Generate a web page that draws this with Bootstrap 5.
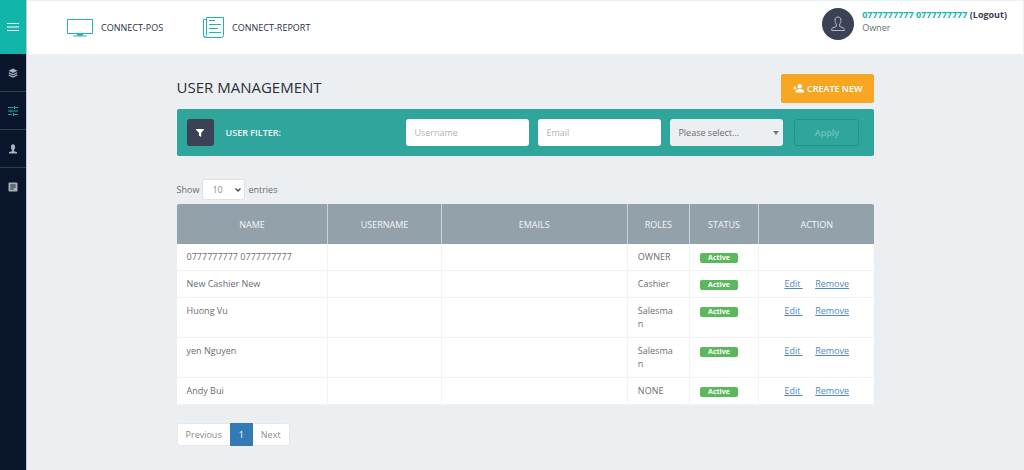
<!DOCTYPE html>
<html lang="en">
<head>
<meta charset="utf-8">
<meta name="viewport" content="width=device-width, initial-scale=1">
<title>User Management</title>
<link href="https://cdn.jsdelivr.net/npm/bootstrap@5.3.0/dist/css/bootstrap.min.css" rel="stylesheet">
<style>
:root { --teal: #12b5a9; --ink: #3b4256; --page: #ebeff2; }
body { font-family: "Open Sans", "Noto Sans", sans-serif; font-size: 9px; line-height: 13px; color: #6a6c6f; background: var(--page); }
.side { width: 27px; background: #08152b; border-right: 1px solid #c3c9cf; }
.side-toggle { height: 54px; background: var(--teal); border: 0; padding: 0; color: #fff; }
.side-link { height: 38px; color: #a9b0ba; border-bottom: 1px solid #343e50; }
.side-link:last-child { border-bottom: 0; }
.side-link.active { color: #20a79d; }
.topbar { height: 54px; background: #fff; border-top: 1px solid #eef0f2; border-right: 1px solid #eef0f2; }
.brand-link { color: #2a3045; text-decoration: none; font-weight: 500; }
.brand-link svg { color: #1fb5aa; flex: none; }
.brands { gap: 40px; padding-left: 40px; }
.avatar { width: 32px; height: 32px; background: var(--ink); color: #b9bec8; }
.account { padding-right: 16px; }
.account a { color: #3a3d4c; text-decoration: none; }
.account .who { color: var(--teal); }
.page { width: 70%; margin: 20px auto 0; }
.page h1 { font-size: 15px; line-height: 20px; color: #2b2d38; font-weight: 400; padding-bottom: 3px; }
.btn { font-size: 9px; line-height: 13px; border-radius: 2px; }
.btn-create { --bs-btn-color: #fff; --bs-btn-bg: #f6a623; --bs-btn-hover-color: #fff; --bs-btn-hover-bg: #e4951a; --bs-btn-border-color: #f6a623; height: 29px; padding: 0 11px; gap: 3px; font-weight: 600; }
.filter-bar { background: #30a59c; border-radius: 2px; padding: 10px 15px 10px 10px; gap: 9px; margin-top: 6px; }
.filter-bar .btn, .filter-bar .form-control, .filter-bar .form-select { height: 27px; border-radius: 3px; }
.btn-funnel { width: 27px; padding: 0; background-color: var(--ink); color: #fff; }
.filter-title { color: #eef9f7; font-weight: 600; margin-left: 3px; }
.form-control, .form-select { font-size: 9px; line-height: 13px; border: 0; padding: 0 8px; }
.form-control { flex: 0 1 123px; }
.form-control::placeholder { color: #b3b3b3; }
.role-select { flex: 0 1 113px; background: var(--page) url("data:image/svg+xml,%3Csvg xmlns='http://www.w3.org/2000/svg' viewBox='0 0 6 4'%3E%3Cpath d='M0 0h6L3 4z' fill='%23777'/%3E%3C/svg%3E") no-repeat right 4px center / 6px 4px; color: #6a6c6f; }
.btn-apply { width: 65px; margin-left: 2px; }
.btn-apply:disabled { color: #70c2ba; border: 1px solid #279188; opacity: 1; font-weight: 600; }
.length-row { margin-top: 23px; margin-bottom: 4px; }
.length-row label { gap: 3px; }
.length-select { width: 43px; height: 21px; padding: 0 9px; border: 1px solid #dfe2e5; border-radius: 3px; color: #8c8c8c; background-image: url("data:image/svg+xml,%3Csvg xmlns='http://www.w3.org/2000/svg' viewBox='0 0 6 4'%3E%3Cpath d='M.5.5 3 3 5.500.5' fill='none' stroke='%23444' stroke-width='1.300'/%3E%3C/svg%3E"); background-size: 6px 4px; background-position: right 3px center; }
.users { table-layout: fixed; --bs-table-bg: #fff; --bs-table-color: #6a6c6f; border-radius: 2px; overflow: hidden; }
.users th { height: 40px; background: #93a1ab; color: #f4f6f8; font-weight: 400; text-align: center; vertical-align: middle; padding: 0; border: 0; border-right: 1px solid #cdd3d8; }
.users td { padding: 6px 10px 7px; border: 0; border-right: 1px solid #f2f3f4; border-bottom: 1px solid #f2f3f4; overflow-wrap: anywhere; }
.users td.role { padding-right: 13px; }
.users th:last-child, .users td:last-child { border-right: 0; }
.users td a { color: #5289bf; }
.users td a + a { margin-left: 10px; }
.c-name { width: 21.7%; } .c-user { width: 16.2%; } .c-mail { width: 26.7%; }
.c-role { width: 8.9%; } .c-stat { width: 9.9%; }
.users .badge { display: block; width: 38px; margin-top: 3px; padding: 0; background: #5cb85c; border-radius: 2px; font-size: 7px; line-height: 10px; font-weight: 700; }
.pagination { --bs-pagination-font-size: 9px; --bs-pagination-padding-x: 8px; --bs-pagination-padding-y: 4px; --bs-pagination-color: #8a8a8a; --bs-pagination-border-color: #e6e8ea; --bs-pagination-border-radius: 3px; --bs-pagination-active-bg: #337ab7; --bs-pagination-active-border-color: #337ab7; margin: 18px 0 0; }
</style>
</head>
<body>
<div class="d-flex min-vh-100">
  <nav class="side d-flex flex-column flex-shrink-0" aria-label="Main">
    <button class="side-toggle d-flex align-items-center justify-content-center" type="button" aria-label="Menu">
      <svg width="12" height="10" viewBox="0 0 12 10" fill="none" stroke="currentColor"><path d="M0 1.500h12M0 5h12M0 8.500h12" stroke-width="1.200"/></svg>
    </button>
    <a class="side-link d-flex align-items-center justify-content-center" href="#" aria-label="Catalog">
      <svg width="10" height="10" viewBox="0 0 10 10"><path d="M5 .5 9.500 2.700 5 5 .5 2.700z" fill="currentColor"/><path d="M.8 4.800 5 6.900l4.200-2.100M.8 6.900 5 9l4.200-2.100" fill="none" stroke="currentColor" stroke-width="1.200"/></svg>
    </a>
    <a class="side-link active d-flex align-items-center justify-content-center" href="#" aria-label="Settings">
      <svg width="10" height="10" viewBox="0 0 10 10" fill="none" stroke="currentColor"><path d="M0 1.500h5.500M7 1.500h3M0 5h2.500M3.500 5H10M0 8.500h4M5.500 8.500H10M6.500 0v3M3 3.500v3M5.500 7v3"/></svg>
    </a>
    <a class="side-link d-flex align-items-center justify-content-center" href="#" aria-label="Customers">
      <svg width="10" height="10" viewBox="0 0 10 10" fill="currentColor"><ellipse cx="5" cy="3.200" rx="2.100" ry="2.900"/><path d="M4 5h2v2.200l3 .9v1.400H1V8.100l3-.9z"/></svg>
    </a>
    <a class="side-link d-flex align-items-center justify-content-center" href="#" aria-label="Reports">
      <svg width="10" height="10" viewBox="0 0 10 10"><rect x=".5" y=".5" width="9" height="9" rx="1" fill="currentColor"/><path d="M2.300 3h5.400M2.300 5h5.400M2.300 7h3.400" stroke="#08152b" stroke-width=".9"/></svg>
    </a>
  </nav>

  <div class="flex-grow-1">
    <header class="topbar d-flex align-items-center">
      <div class="brands d-flex align-items-center">
        <a class="brand-link d-flex align-items-center gap-2" href="#">
          <svg width="26" height="18" viewBox="0 0 26 18" fill="none" stroke="currentColor"><path d="M.5.5h25v14H.5z"/><path d="M6 17h14"/><path d="M10 15.800h6" stroke-width="2"/></svg>
          CONNECT-POS
        </a>
        <a class="brand-link d-flex align-items-center gap-2" href="#">
          <svg width="21" height="21" viewBox="0 0 21 21" fill="none" stroke="currentColor"><path d="M3.500.5h17v18a2 2 0 0 1-2 2h-16a2 2 0 0 1-2-2v-16h3M3.500.5v17a1.500 1.500 0 0 1-3 1M6 3.500h6M6 7.500h12M6 11.500h9M6 15.500h12"/></svg>
          CONNECT-REPORT
        </a>
      </div>
      <div class="account ms-auto d-flex align-items-start gap-2 pb-2">
        <div class="avatar rounded-circle d-flex align-items-center justify-content-center">
          <svg width="14" height="16" viewBox="0 0 14 16" fill="none" stroke="currentColor"><path d="M7 1C5 1 4 2.300 4 4.200c0 1.800.5 2.800 1.300 3.800v2.500L1.500 12c-.6.300-.9 1-.9 2.500h12.800c0-1.500-.3-2.200-.9-2.500l-3.800-1.500V8C9.500 7 10 6 10 4.200 10 2.300 9 1 7 1z"/></svg>
        </div>
        <div>
          <div class="fw-bold"><a class="who" href="#">0777777777 0777777777</a> <a href="#">(Logout)</a></div>
          <div>Owner</div>
        </div>
      </div>
    </header>

    <main class="page">
      <div class="d-flex justify-content-between align-items-center">
        <h1 class="mb-0">USER MANAGEMENT</h1>
        <button class="btn btn-create d-flex align-items-center" type="button">
          <svg width="11" height="9" viewBox="0 0 11 9" fill="currentColor"><circle cx="6.800" cy="2.300" r="2.200"/><path d="M2.600 8.500V7.300C2.600 5.800 5 5 6.800 5S11 5.800 11 7.300v1.200zM1.300 2.300h1v1.200h1.200v1H2.300v1.200h-1V4.500H0v-1h1.300z"/></svg>
          CREATE NEW
        </button>
      </div>

      <form class="filter-bar d-flex align-items-center">
        <button class="btn btn-funnel d-flex align-items-center justify-content-center" type="button" aria-label="Filter">
          <svg width="8" height="8" viewBox="0 0 8 8" fill="currentColor"><path d="M0 0h8v.8L5.200 3.700V8L2.900 6.500V3.700L0 .8z"/></svg>
        </button>
        <span class="filter-title me-auto">USER FILTER:</span>
        <input class="form-control" type="text" placeholder="Username" aria-label="Username">
        <input class="form-control" type="email" placeholder="Email" aria-label="Email">
        <select class="form-select role-select" aria-label="Role"><option>Please select...</option></select>
        <button class="btn btn-apply" type="submit" disabled>Apply</button>
      </form>

      <div class="length-row d-flex align-items-center">
        <label for="length" class="d-flex align-items-center">Show
          <select id="length" class="form-select length-select"><option>10</option></select>
          entries</label>
      </div>

      <table class="table users mb-0">
        <thead>
          <tr><th class="c-name">NAME</th><th class="c-user">USERNAME</th><th class="c-mail">EMAILS</th><th class="c-role">ROLES</th><th class="c-stat">STATUS</th><th>ACTION</th></tr>
        </thead>
        <tbody>
          <tr><td>0777777777 0777777777</td><td></td><td></td><td class="role">OWNER</td><td><span class="badge">Active</span></td><td></td></tr>
          <tr><td>New Cashier New</td><td></td><td></td><td class="role">Cashier</td><td><span class="badge">Active</span></td><td class="text-center"><a href="#">Edit&nbsp;</a> <a href="#">Remove</a></td></tr>
          <tr><td>Huong Vu</td><td></td><td></td><td class="role">Salesman</td><td><span class="badge">Active</span></td><td class="text-center"><a href="#">Edit&nbsp;</a> <a href="#">Remove</a></td></tr>
          <tr><td>yen Nguyen</td><td></td><td></td><td class="role">Salesman</td><td><span class="badge">Active</span></td><td class="text-center"><a href="#">Edit&nbsp;</a> <a href="#">Remove</a></td></tr>
          <tr><td>Andy Bui</td><td></td><td></td><td class="role">NONE</td><td><span class="badge">Active</span></td><td class="text-center"><a href="#">Edit&nbsp;</a> <a href="#">Remove</a></td></tr>
        </tbody>
      </table>

      <nav aria-label="Pages">
        <ul class="pagination">
          <li class="page-item"><a class="page-link" href="#">Previous</a></li>
          <li class="page-item active"><a class="page-link" href="#" aria-current="page">1</a></li>
          <li class="page-item"><a class="page-link" href="#">Next</a></li>
        </ul>
      </nav>
    </main>
  </div>
</div>
<script src="https://cdn.jsdelivr.net/npm/bootstrap@5.3.0/dist/js/bootstrap.bundle.min.js"></script>
</body>
</html>
